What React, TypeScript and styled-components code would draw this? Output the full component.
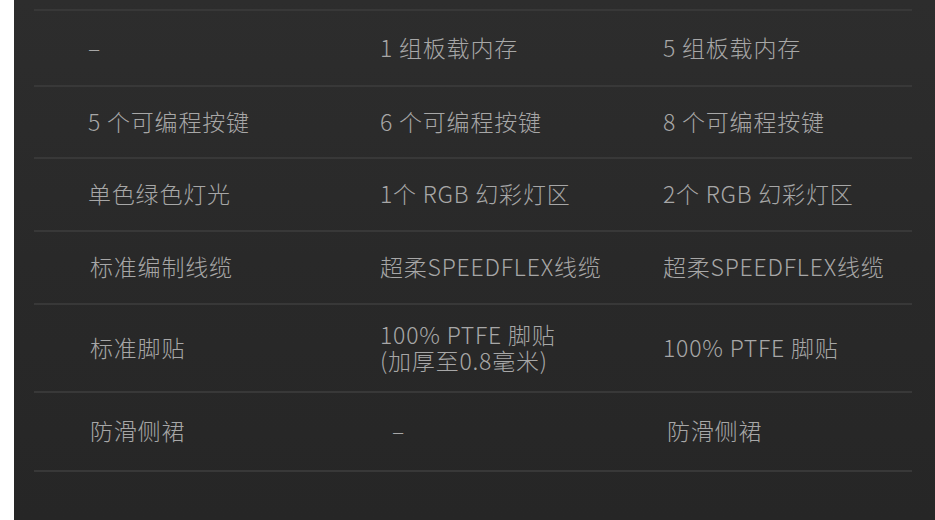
import React from "react";
import styled, { createGlobalStyle } from "styled-components";

const Global = createGlobalStyle`
  html, body { margin: 0; padding: 0; background: #ffffff; }
  #root { width: 935px; height: 520px; }
`;

const Page = styled.div`
  display: flex;
  width: 935px;
  height: 520px;
  background: #ffffff;
`;

const Panel = styled.div`
  margin-left: 14px;
  flex: 1;
  height: 520px;
  background: linear-gradient(180deg, #2d2d2d 0%, #292929 50%, #262626 100%);
  padding: 9px 23px 0 20px;
  box-sizing: border-box;
`;

const Table = styled.div`
  display: flex;
  flex-direction: column;
  border-bottom: 2px solid #383838;
`;

const Row = styled.div<{ $h: number }>`
  display: grid;
  grid-template-columns: 292px 283px 1fr;
  align-items: center;
  min-height: ${(p) => p.$h}px;
  padding-left: 54px;
  border-top: 2px solid #383838;
`;

const Cell = styled.div<{ $indent?: number }>`
  font-family: "Noto Sans CJK SC", "Noto Sans", sans-serif;
  font-size: 23px;
  font-weight: 300;
  line-height: 26px;
  letter-spacing: 0.8px;
  color: #a7a7a7;
  white-space: nowrap;
  padding-left: ${(p) => p.$indent ?? 0}px;
  margin-top: -3px;
`;

type R = { cells: (string | string[])[]; h: number; indents?: number[] };

const rows: R[] = [
  { cells: ["–", "1 组板载内存", "5 组板载内存"], h: 74 },
  { cells: ["5 个可编程按键", "6 个可编程按键", "8 个可编程按键"], h: 70 },
  { cells: ["单色绿色灯光", "1个 RGB 幻彩灯区", "2个 RGB 幻彩灯区"], h: 71, indents: [-5, 0, 0] },
  { cells: ["标准编制线缆", "超柔SPEEDFLEX线缆", "超柔SPEEDFLEX线缆"], h: 71, indents: [2, 0, 0] },
  {
    cells: ["标准脚贴", ["100% PTFE 脚贴", "(加厚至0.8毫米)"], "100% PTFE 脚贴"],
    h: 86,
    indents: [2, 0, 0],
  },
  { cells: ["防滑侧裙", "–", "防滑侧裙"], h: 77, indents: [2, 12, 4] },
];

export default function App() {
  return (
    <>
      <Global />
      <Page>
        <Panel>
          <Table>
            {rows.map((r, i) => (
              <Row key={i} $h={r.h}>
                {r.cells.map((c, j) => (
                  <Cell key={j} $indent={r.indents?.[j]}>
                    {Array.isArray(c) ? (
                      <>
                        {c[0]}
                        <br />
                        {c[1]}
                      </>
                    ) : (
                      c
                    )}
                  </Cell>
                ))}
              </Row>
            ))}
          </Table>
        </Panel>
      </Page>
    </>
  );
}
